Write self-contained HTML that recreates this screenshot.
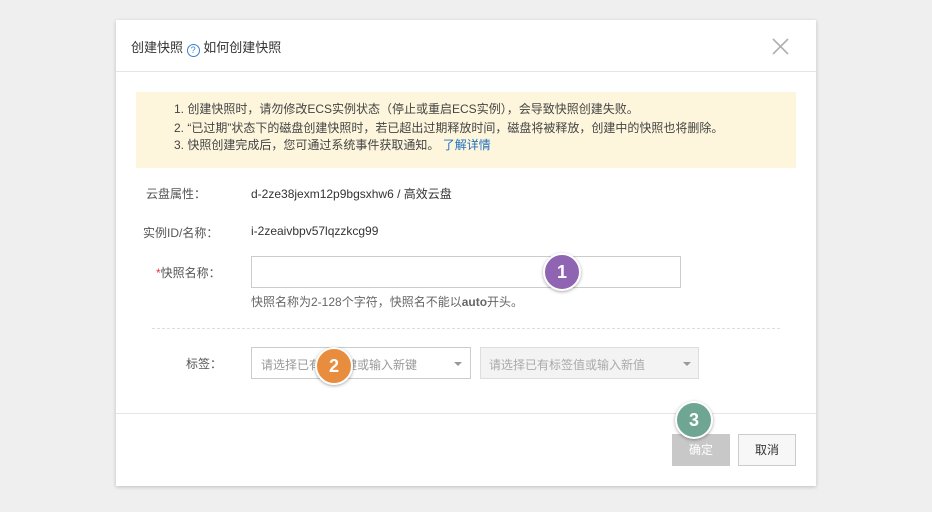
<!DOCTYPE html>
<html><head><meta charset="utf-8"><style>
body{margin:0;width:932px;height:512px;background:#efefef;font-family:"Liberation Sans","Noto Sans CJK SC",sans-serif;font-size:12px;color:#333;position:relative;overflow:hidden}
.dlg{position:absolute;left:116px;top:20px;width:700px;height:466px;background:#fff;box-shadow:0 1px 4px rgba(0,0,0,.2)}
.a{position:absolute;white-space:nowrap}
.note{position:absolute;left:20px;top:72px;width:660px;height:76px;background:#fdf6dd}
.note div{position:absolute;left:38px;font-size:12px;color:#444}
.inp{position:absolute;border:1px solid #ccc;background:#fff;box-sizing:border-box}
.c{position:absolute;width:34px;height:34px;border-radius:50%;border:2px solid #fff;box-shadow:0 1px 3px rgba(0,0,0,.35);color:#fff;font-weight:bold;font-size:18px;text-align:center;line-height:34px;box-sizing:content-box}
.arr{position:absolute;width:0;height:0;border-left:4px solid transparent;border-right:4px solid transparent;border-top:4px solid #999}
</style></head><body>
<div class="dlg">
 <div class="a" style="left:15px;top:17px;font-size:13px;color:#333">创建快照 <span style="display:inline-block;width:11px;height:11px;border:1px solid #3a7fcf;border-radius:50%;color:#3a7fcf;font-size:9px;line-height:11px;text-align:center;vertical-align:-1px">?</span> 如何创建快照</div>
 <svg style="position:absolute;left:656px;top:18px" width="17" height="17"><path d="M1 1L16 16M16 1L1 16" stroke="#b0b0b0" stroke-width="1.6"/></svg>
 <div style="position:absolute;left:0;top:51px;width:700px;height:1px;background:#e5e5e5"></div>
 <div class="note">
  <div style="top:8px">1. 创建快照时，请勿修改ECS实例状态（停止或重启ECS实例），会导致快照创建失败。</div>
  <div style="top:27px">2. “已过期”状态下的磁盘创建快照时，若已超出过期释放时间，磁盘将被释放，创建中的快照也将删除。</div>
  <div style="top:44px">3. 快照创建完成后，您可通过系统事件获取通知。 <span style="color:#1f6fbf">了解详情</span></div>
 </div>
 <div class="a" style="left:30px;top:165px;color:#555">云盘属性：</div>
 <div class="a" style="left:135px;top:165px">d-2ze38jexm12p9bgsxhw6 / 高效云盘</div>
 <div class="a" style="left:27px;top:204px;color:#555">实例ID/名称：</div>
 <div class="a" style="left:135px;top:204px">i-2zeaivbpv57lqzzkcg99</div>
 <div class="a" style="left:40px;top:244px;color:#555"><span style="color:#e4393c">*</span>快照名称：</div>
 <div class="inp" style="left:135px;top:236px;width:430px;height:32px"></div>
 <div class="a" style="left:135px;top:273px;color:#666">快照名称为2-128个字符，快照名不能以<b>auto</b>开头。</div>
 <div style="position:absolute;left:36px;top:308px;width:628px;border-top:1px dashed #ddd"></div>
 <div class="a" style="left:70px;top:335px;color:#555">标签：</div>
 <div class="inp" style="left:135px;top:327px;width:220px;height:32px"></div>
 <div class="a" style="left:145px;top:336px;color:#999">请选择已有标签键或输入新键</div>
 <div class="arr" style="left:338px;top:342px"></div>
 <div class="inp" style="left:364px;top:327px;width:219px;height:32px;background:#f3f3f3;border-color:#ddd"></div>
 <div class="a" style="left:373px;top:336px;color:#aaa">请选择已有标签值或输入新值</div>
 <div class="arr" style="left:567px;top:342px"></div>
 <div style="position:absolute;left:0;top:393px;width:700px;height:1px;background:#e5e5e5"></div>
 <div class="a" style="left:556px;top:414px;width:58px;height:32px;background:#c8c8c8;color:#fff;text-align:center;line-height:32px">确定</div>
 <div class="a" style="left:622px;top:414px;width:56px;height:30px;border:1px solid #ccc;background:#f7f7f7;text-align:center;line-height:30px">取消</div>
</div>
<div class="c" style="left:543px;top:253px;background:#8f65b3">1</div>
<div class="c" style="left:315px;top:347px;background:#e88d3e">2</div>
<div class="c" style="left:675px;top:401px;background:#6fa593">3</div>
</body></html>
